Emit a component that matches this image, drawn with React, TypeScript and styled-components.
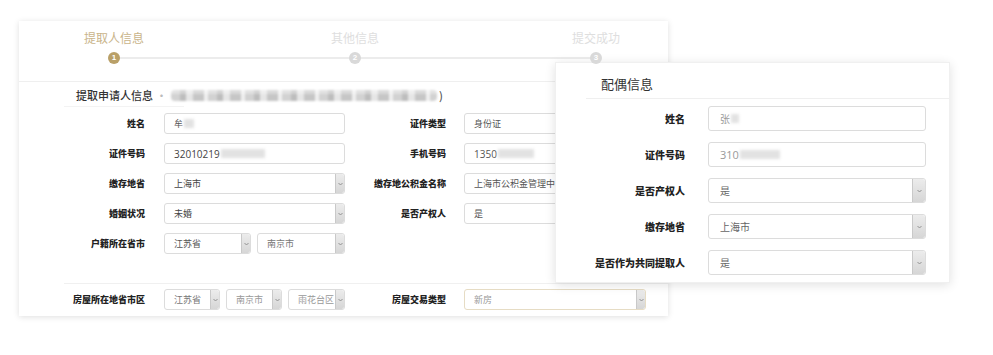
import React from "react";
import styled, { createGlobalStyle } from "styled-components";

const Global = createGlobalStyle`
  html, body { margin: 0; padding: 0; background: #fff; }
  body { font-family: "Noto Sans CJK SC", "Noto Sans", sans-serif; }
  * { box-sizing: border-box; }
`;

const Page = styled.div`
  position: relative;
  width: 993px;
  height: 355px;
  padding: 21px 0 0 19px;
  overflow: hidden;
`;

const MainCard = styled.div`
  width: 649px;
  height: 295px;
  background: #fff;
  box-shadow: 0 1px 6px rgba(0, 0, 0, 0.13);
`;

const StepsBar = styled.div`
  position: relative;
  height: 61px;
  border-bottom: 1px solid #efefef;
  display: flex;
  justify-content: space-between;
  padding: 0 32px 0 55px;
  &::before {
    content: "";
    position: absolute;
    left: 95px;
    right: 72px;
    top: 36px;
    height: 2px;
    background: #ececec;
  }
`;

const Step = styled.div`
  width: 80px;
  display: flex;
  flex-direction: column;
  align-items: center;
  padding-top: 8px;
`;

const StepLabel = styled.div<{ $active?: boolean }>`
  font-size: 12px;
  line-height: 18px;
  color: ${(p) => (p.$active ? "#c9b48a" : "#dedede")};
  white-space: nowrap;
`;

const StepDot = styled.div<{ $active?: boolean }>`
  position: relative;
  z-index: 1;
  margin-top: 5px;
  width: 12px;
  height: 12px;
  border-radius: 50%;
  background: ${(p) => (p.$active ? "#b9a068" : "#d9d9d9")};
  color: #fff;
  font-size: 8px;
  line-height: 12px;
  text-align: center;
  font-family: "Liberation Sans", sans-serif;
  font-weight: bold;
`;

const SectionHead = styled.div`
  display: flex;
  align-items: center;
  padding: 5px 0 3px 57px;
  height: 24px;
  font-size: 11px;
  line-height: 16px;
  color: #333;
  font-weight: 500;
`;

const Dotted = styled.span`
  color: #bbb;
  margin: 0 4px 0 3px;
`;

const BlurBlock = styled.span<{ $w: number }>`
  display: inline-block;
  width: ${(p) => p.$w}px;
  height: 11px;
  background:
    linear-gradient(180deg, rgba(255,255,255,0.35) 0 40%, rgba(255,255,255,0) 40% 100%),
    repeating-linear-gradient(
      90deg,
      #d2d2d2 0px,
      #d2d2d2 9px,
      #bdbdbd 9px,
      #bdbdbd 15px,
      #e6e6e6 15px,
      #e6e6e6 22px,
      #c6c6c6 22px,
      #c6c6c6 33px,
      #f0f0f0 33px,
      #f0f0f0 37px
    );
  filter: blur(0.8px);
  border-radius: 4px;
`;

const SoftBlur = styled.span<{ $w: number }>`
  display: inline-block;
  width: ${(p) => p.$w}px;
  height: 9px;
  background: #e2e2e2;
  filter: blur(1.5px);
  margin-left: 1px;
`;

const Paren = styled.span`
  color: #555;
  margin-left: 2px;
`;

const TitleRule = styled.div`
  margin-left: 45px;
  width: 120px;
  height: 1px;
  background: #f3f3f3;
`;

const Form = styled.div`
  display: flex;
  flex-direction: column;
  gap: 9px;
  padding-left: 45px;
  margin-top: 6px;
`;

const Row = styled.div`
  display: flex;
  align-items: center;
  height: 21px;
`;

const Field = styled.div`
  display: flex;
  align-items: center;
`;

const Label = styled.div<{ $w: number; $gap?: number; $size?: number }>`
  width: ${(p) => p.$w}px;
  margin-right: ${(p) => p.$gap ?? 19}px;
  text-align: right;
  font-size: ${(p) => p.$size ?? 9}px;
  font-weight: 900;
  color: #222;
  white-space: nowrap;
`;

const Controls = styled.div`
  display: flex;
  gap: 6px;
`;

const Box = styled.div<{ $w: number; $h?: number; $color?: string; $size?: number; $pad?: number; $gold?: boolean }>`
  width: ${(p) => p.$w}px;
  height: ${(p) => p.$h ?? 21}px;
  border: 1px solid ${(p) => (p.$gold ? "#e6dcc4" : "#dcdcdc")};
  border-radius: 3px;
  background: #fff;
  display: flex;
  align-items: center;
  padding-left: ${(p) => p.$pad ?? 9}px;
  font-size: ${(p) => p.$size ?? 9}px;
  color: ${(p) => p.$color ?? "#555"};
  white-space: nowrap;
  overflow: hidden;
`;

const Value = styled.span`
  flex: 1;
  overflow: hidden;
  display: flex;
  align-items: center;
`;

const Num = styled.span<{ $size?: number }>`
  font-family: "Open Sans", "Noto Sans", sans-serif;
  font-size: ${(p) => p.$size ?? 10}px;
`;

const Arrow = styled.div<{ $w?: number }>`
  width: ${(p) => p.$w ?? 9}px;
  align-self: stretch;
  background: linear-gradient(#ececec, #d6d6d6);
  border-left: 1px solid #c9c9c9;
  border-radius: 0 2px 2px 0;
  display: flex;
  align-items: center;
  justify-content: center;
`;

const BottomRule = styled.div`
  margin: 29px 0 0 45px;
  height: 1px;
  background: #f0f0f0;
`;

const BottomForm = styled.div`
  padding-left: 45px;
  margin-top: 5px;
`;

const Overlay = styled.div`
  position: absolute;
  left: 555px;
  top: 62px;
  width: 395px;
  height: 221px;
  background: #fff;
  border: 1px solid #f0f0f0;
  box-shadow: 0 2px 10px rgba(0, 0, 0, 0.12);
`;

const OverlayTitle = styled.div`
  height: 35px;
  padding: 12px 0 0 45px;
  font-size: 13px;
  line-height: 18px;
  color: #333;
`;

const OverlayRule = styled.div`
  margin-left: 30px;
  height: 1px;
  background: #efefef;
`;

const OverlayForm = styled.div`
  display: flex;
  flex-direction: column;
  gap: 11px;
  padding-top: 7px;
`;

const OverlayRow = styled.div`
  display: flex;
  align-items: center;
  height: 25px;
`;

const Chevron = () => (
  <svg width="5" height="4" viewBox="0 0 5 4">
    <path d="M0.5 1 L2.5 3 L4.5 1" fill="none" stroke="#8a8a8a" strokeWidth="0.9" />
  </svg>
);

type SelProps = { w: number; h?: number; color?: string; size?: number; pad?: number; arrowW?: number; gold?: boolean; children: React.ReactNode };
const Select = ({ w, h, color, size, pad, arrowW, gold, children }: SelProps) => (
  <Box $w={w} $h={h} $color={color} $size={size} $pad={pad} $gold={gold}>
    <Value>{children}</Value>
    <Arrow $w={arrowW}>
      <Chevron />
    </Arrow>
  </Box>
);

export default function App() {
  return (
    <>
      <Global />
      <Page>
        <MainCard>
          <StepsBar>
            <Step>
              <StepLabel $active>提取人信息</StepLabel>
              <StepDot $active>1</StepDot>
            </Step>
            <Step>
              <StepLabel>其他信息</StepLabel>
              <StepDot>2</StepDot>
            </Step>
            <Step>
              <StepLabel>提交成功</StepLabel>
              <StepDot>3</StepDot>
            </Step>
          </StepsBar>

          <SectionHead>
            提取申请人信息
            <Dotted>·</Dotted>
            <BlurBlock $w={266} />
            <Paren>)</Paren>
          </SectionHead>
          <TitleRule />

          <Form>
            <Row>
              <Field>
                <Label $w={81}>姓名</Label>
                <Box $w={181} $color="#555">
                  牟<SoftBlur $w={10} />
                </Box>
              </Field>
              <Field>
                <Label $w={101} $gap={18}>证件类型</Label>
                <Box $w={182} $color="#555">身份证</Box>
              </Field>
            </Row>
            <Row>
              <Field>
                <Label $w={81}>证件号码</Label>
                <Box $w={181} $color="#444">
                  <Num>32010219</Num>
                  <SoftBlur $w={44} />
                </Box>
              </Field>
              <Field>
                <Label $w={101} $gap={18}>手机号码</Label>
                <Box $w={182} $color="#555">
                  <Num>1350</Num>
                  <SoftBlur $w={36} />
                </Box>
              </Field>
            </Row>
            <Row>
              <Field>
                <Label $w={81}>缴存地省</Label>
                <Select w={181} color="#444">上海市</Select>
              </Field>
              <Field>
                <Label $w={101} $gap={18}>缴存地公积金名称</Label>
                <Select w={182} color="#555">上海市公积金管理中心</Select>
              </Field>
            </Row>
            <Row>
              <Field>
                <Label $w={81}>婚姻状况</Label>
                <Select w={181} color="#444">未婚</Select>
              </Field>
              <Field>
                <Label $w={101} $gap={18}>是否产权人</Label>
                <Select w={182} color="#555">是</Select>
              </Field>
            </Row>
            <Row>
              <Field>
                <Label $w={81}>户籍所在省市</Label>
                <Controls>
                  <Select w={87} color="#555">江苏省</Select>
                  <Select w={88} color="#777">南京市</Select>
                </Controls>
              </Field>
            </Row>
          </Form>

          <BottomRule />
          <BottomForm>
            <Row>
              <Field>
                <Label $w={81}>房屋所在地省市区</Label>
                <Controls>
                  <Select w={56} color="#777">江苏省</Select>
                  <Select w={56} color="#999">南京市</Select>
                  <Select w={57} color="#999">雨花台区</Select>
                </Controls>
              </Field>
              <Field>
                <Label $w={101} $gap={18}>房屋交易类型</Label>
                <Select w={182} color="#999" gold>新房</Select>
              </Field>
            </Row>
          </BottomForm>
        </MainCard>

        <Overlay>
          <OverlayTitle>配偶信息</OverlayTitle>
          <OverlayRule />
          <OverlayForm>
            <OverlayRow>
              <Label $w={129} $gap={23} $size={10}>姓名</Label>
              <Box $w={218} $h={25} $size={10} $pad={11} $color="#999">
                张<SoftBlur $w={8} />
              </Box>
            </OverlayRow>
            <OverlayRow>
              <Label $w={129} $gap={23} $size={10}>证件号码</Label>
              <Box $w={218} $h={25} $size={10} $pad={11} $color="#999">
                <Num $size={11}>310</Num>
                <SoftBlur $w={40} />
              </Box>
            </OverlayRow>
            <OverlayRow>
              <Label $w={129} $gap={23} $size={10}>是否产权人</Label>
              <Select w={218} h={25} size={10} pad={11} arrowW={13} color="#666">是</Select>
            </OverlayRow>
            <OverlayRow>
              <Label $w={129} $gap={23} $size={10}>缴存地省</Label>
              <Select w={218} h={25} size={10} pad={11} arrowW={13} color="#666">上海市</Select>
            </OverlayRow>
            <OverlayRow>
              <Label $w={129} $gap={23} $size={10}>是否作为共同提取人</Label>
              <Select w={218} h={25} size={10} pad={11} arrowW={13} color="#666">是</Select>
            </OverlayRow>
          </OverlayForm>
        </Overlay>
      </Page>
    </>
  );
}
